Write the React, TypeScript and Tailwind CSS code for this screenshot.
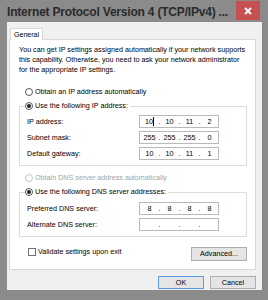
const FONT = "font-['Liberation_Sans',Arial,sans-serif]";

function Radio({ checked, disabled }: { checked?: boolean; disabled?: boolean }) {
  return (
    <span
      className={`flex h-[8px] w-[8px] shrink-0 items-center justify-center rounded-full border bg-white ${
        disabled ? "border-[#c4c4c4]" : "border-[#555]"
      }`}
    >
      {checked && <span className="h-[4px] w-[4px] rounded-full bg-[#222]" />}
    </span>
  );
}

function RadioRow({
  label,
  checked,
  disabled,
}: {
  label: string;
  checked?: boolean;
  disabled?: boolean;
}) {
  return (
    <div className="flex h-[10px] items-center gap-[2px] bg-white pr-[2px]">
      <Radio checked={checked} disabled={disabled} />
      <span className={disabled ? "text-[#a3a3a3]" : "text-black"}>{label}</span>
    </div>
  );
}

function IpField({ octets, cursor }: { octets: string[]; cursor?: boolean }) {
  return (
    <div className="flex h-[13px] w-[80px] items-center border border-[#b9b9b9] bg-white pl-[1px]">
      {octets.map((octet, i) => (
        <div key={i} className="flex items-center">
          {i > 0 && <span className="w-[3px] text-center">.</span>}
          <span className="flex w-[17px] items-center justify-center">
            {octet}
            {cursor && i === 0 && <span className="h-[9px] w-px bg-black" />}
          </span>
        </div>
      ))}
    </div>
  );
}

function FieldRow({ label, octets, cursor }: { label: string; octets: string[]; cursor?: boolean }) {
  return (
    <div className="flex items-center pl-[7px]">
      <span className="w-[112px] text-black">{label}</span>
      <IpField octets={octets} cursor={cursor} />
    </div>
  );
}

function Button({ label, isDefault }: { label: string; isDefault?: boolean }) {
  return (
    <button
      className={`flex h-[13px] w-[46px] items-center justify-center border bg-[#e5e5e5] text-black ${
        isDefault ? "border-[#5b9be0]" : "border-[#adadad]"
      }`}
    >
      {label}
    </button>
  );
}

export default function App() {
  return (
    <div className={`flex h-[300px] w-[268px] flex-col bg-[#8b8b8b] pb-[10px] pl-[7px] pr-[6px] ${FONT}`}>
      {/* title bar */}
      <div className="flex h-[22px] shrink-0 items-start justify-between">
        <span className="mt-[5px] whitespace-nowrap text-[12px] font-bold leading-[14px] tracking-[-0.2px] text-[#2a2a2a]">
          Internet Protocol Version 4 (TCP/IPv4) ...
        </span>
        <div className="mr-[2px] mt-px flex h-[19px] w-[24px] items-center justify-center bg-[#c75050]">
          <svg width="8" height="8" viewBox="0 0 8 8">
            <path d="M1 1 L7 7 M7 1 L1 7" stroke="white" strokeWidth="1.8" />
          </svg>
        </div>
      </div>

      {/* body */}
      <div className="flex flex-1 flex-col bg-[#f0f0f0] pl-[2px] pr-[6px] pt-[6px] text-[7.2px] leading-[10px]">
        <div className="relative z-10 ml-px flex h-[12px] w-[33px] items-center justify-center border border-b-0 border-[#d9d9d9] bg-white text-[7px] text-black">
          General
        </div>
        <div className="-mt-px flex h-[231px] flex-col border border-[#d9d9d9] bg-white pl-[9px] pr-[8px] pt-[5px]">
          <p className="whitespace-nowrap text-black">
            You can get IP settings assigned automatically if your network supports
            <br />
            this capability. Otherwise, you need to ask your network administrator
            <br />
            for the appropriate IP settings.
          </p>

          <div className="ml-[6px] mt-[12px]">
            <RadioRow label="Obtain an IP address automatically" />
          </div>

          <fieldset className="mt-[4px] border border-[#dcdcdc] pb-[5px]">
            <legend className="ml-[5px]">
              <RadioRow label="Use the following IP address:" checked />
            </legend>
            <div className="mt-[4px] flex flex-col gap-[3px]">
              <FieldRow label="IP address:" octets={["10", "10", "11", "2"]} cursor />
              <FieldRow label="Subnet mask:" octets={["255", "255", "255", "0"]} />
              <FieldRow label="Default gateway:" octets={["10", "10", "11", "1"]} />
            </div>
          </fieldset>

          <div className="ml-[6px] mt-[7px]">
            <RadioRow label="Obtain DNS server address automatically" disabled />
          </div>

          <fieldset className="mt-[4px] border border-[#dcdcdc] pb-[5px]">
            <legend className="ml-[5px]">
              <RadioRow label="Use the following DNS server addresses:" checked />
            </legend>
            <div className="mt-[5px] flex flex-col gap-[3px]">
              <FieldRow label="Preferred DNS server:" octets={["8", "8", "8", "8"]} />
              <FieldRow label="Alternate DNS server:" octets={["", "", "", ""]} />
            </div>
          </fieldset>

          <div className="mt-[10px] flex items-start justify-between">
            <label className="ml-[9px] flex items-center gap-[2px] text-black">
              <span className="h-[8px] w-[8px] border border-[#707070] bg-white" />
              Validate settings upon exit
            </label>
            <button className="flex h-[14px] w-[56px] items-center justify-center border border-[#adadad] bg-[#e5e5e5] text-black">
              Advanced...
            </button>
          </div>
        </div>

        <div className="mt-[6px] flex justify-end gap-[6px]">
          <Button label="OK" isDefault />
          <Button label="Cancel" />
        </div>
      </div>
    </div>
  );
}
